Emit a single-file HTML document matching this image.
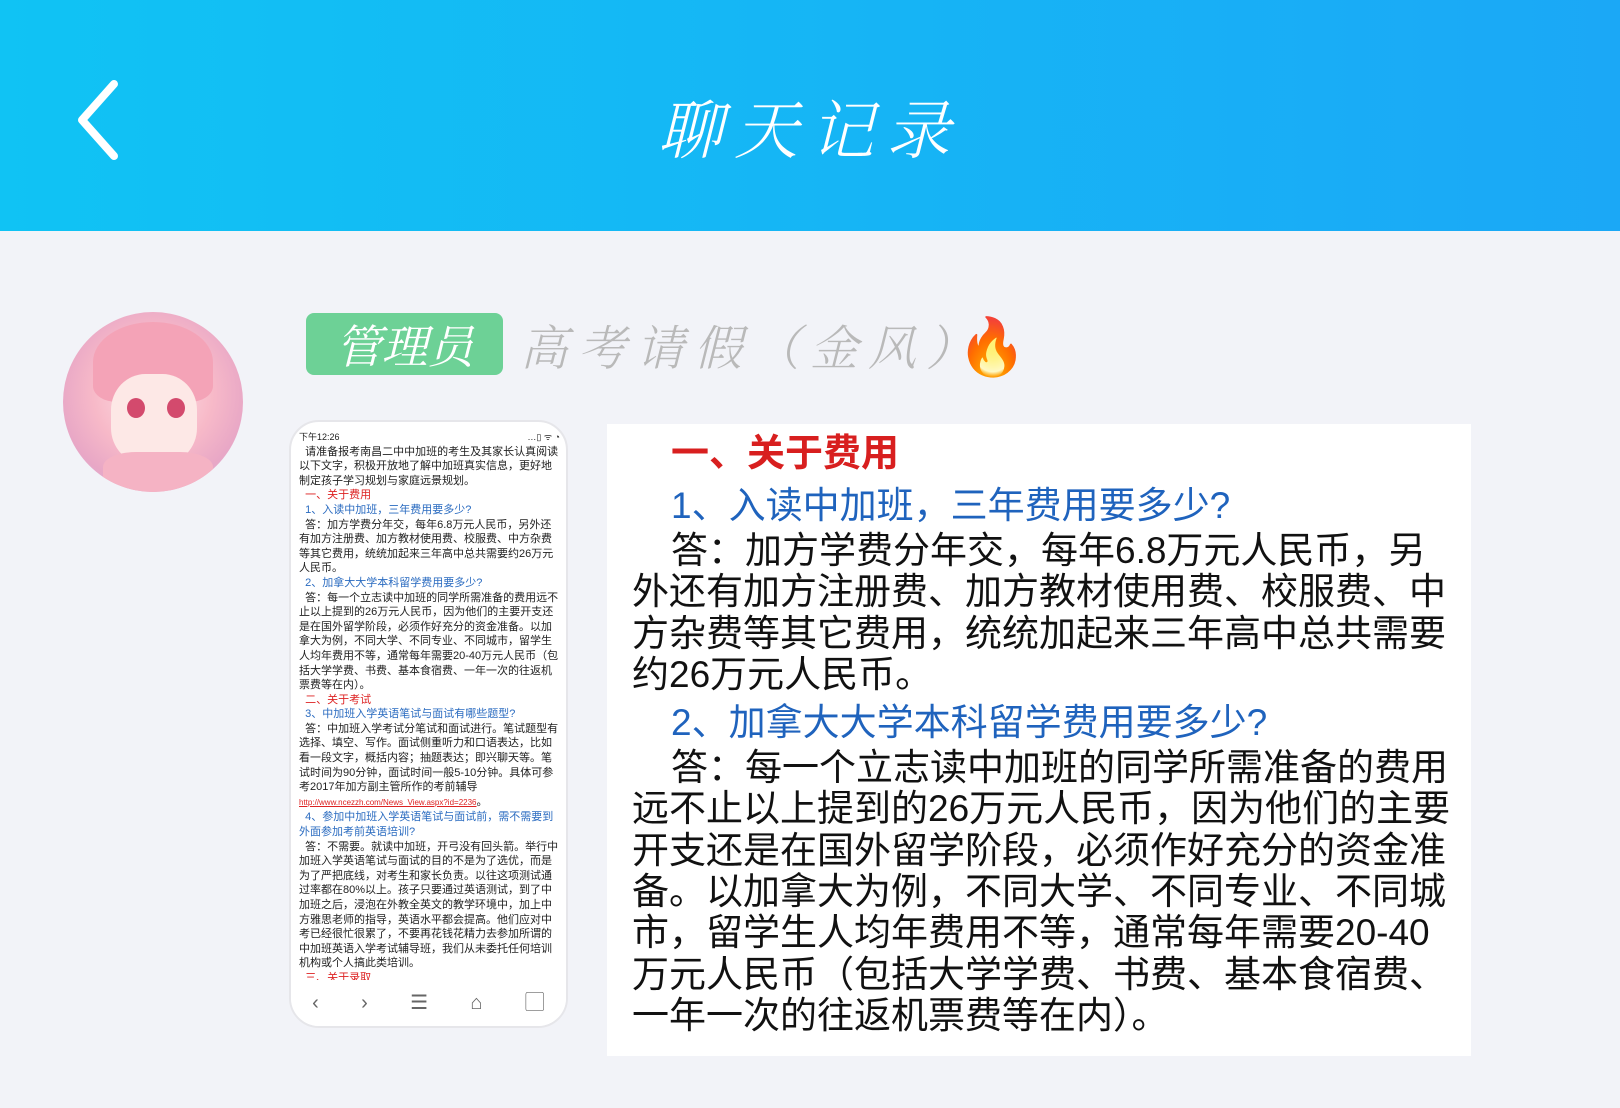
<!DOCTYPE html>
<html><head><meta charset="utf-8"><style>
*{margin:0;padding:0;box-sizing:border-box}
body{width:1620px;height:1108px;overflow:hidden;background:#f2f3f8;font-family:"Liberation Sans","Noto Sans CJK SC",sans-serif;position:relative}
.hdr{position:absolute;left:0;top:0;width:1620px;height:231px;background:linear-gradient(90deg,#10c3f4,#1ba8f6)}
.title{position:absolute;left:0;width:1620px;top:80px;text-align:center;color:#fff;font-family:"Noto Serif CJK SC",serif;font-size:64px;font-weight:300;letter-spacing:12px;font-style:italic}
.av{position:absolute;left:63px;top:312px;width:180px;height:180px;border-radius:50%;background:radial-gradient(circle at 50% 45%,#fde3e6 0,#f7b9c8 45%,#e8a7c6 70%,#c9b3e6 100%);overflow:hidden}
.badge{position:absolute;left:306px;top:313px;width:197px;height:62px;border-radius:8px;background:#6dd196;color:#fff;font-family:"Noto Serif CJK SC",serif;font-size:46px;text-align:center;line-height:62px;font-style:italic}
.name{position:absolute;left:520px;top:313px;font-family:"Noto Serif CJK SC",serif;color:#b9b9b9;font-size:48px;letter-spacing:10px;line-height:64px;font-weight:300;font-style:italic}
.fire{position:absolute;left:957px;top:315px;font-size:56px;line-height:64px}
.phone{position:absolute;left:289px;top:420px;width:279px;height:608px;background:#fff;border-radius:30px;border:2px solid #e6e6ea;overflow:hidden;padding:8px 6px 0 8px;font-size:11px;line-height:14.6px;color:#222}
.phone p{margin:0}
.r{color:#d22}.b{color:#2a6bc0}
.pnav{position:absolute;left:0;bottom:0;width:100%;height:46px;background:#fff;display:flex;justify-content:space-around;align-items:center;font-size:20px;color:#666}
.doc{position:absolute;left:607px;top:424px;width:864px;height:632px;background:#fff;padding:8px 0 0 25px;font-size:37px;line-height:41.3px;color:#111;overflow:hidden}
.doc p{margin:0;white-space:nowrap}
.doc .a{text-indent:39px}
.doc .h{color:#d81f1f;font-weight:bold;padding-left:39px;font-size:38px;line-height:44px}
.doc .q{color:#1f63bd;padding-left:39px;line-height:48px;margin-top:4px}
</style></head><body>
<div class="hdr">
<svg style="position:absolute;left:74px;top:80px" width="50" height="80" viewBox="0 0 50 80"><path d="M40 4 L8 40 L40 76" fill="none" stroke="#fff" stroke-width="8" stroke-linecap="round" stroke-linejoin="round"/></svg>
<div class="title">聊天记录</div>
</div>
<div class="av">
<div style="position:absolute;left:30px;top:10px;width:120px;height:80px;border-radius:50% 50% 20% 20%;background:#f4a3b7"></div>
<div style="position:absolute;left:48px;top:62px;width:86px;height:90px;border-radius:40%;background:#fde8e6"></div>
<div style="position:absolute;left:64px;top:86px;width:18px;height:20px;border-radius:50%;background:#d34a6d"></div>
<div style="position:absolute;left:104px;top:86px;width:18px;height:20px;border-radius:50%;background:#d34a6d"></div>
<div style="position:absolute;left:40px;top:140px;width:110px;height:50px;border-radius:30%;background:#f5b3c4"></div>
</div>
<div class="badge">管理员</div>
<div class="name">高考请假（金风）</div>
<div class="fire">🔥</div>
<div class="phone">
<p style="font-size:9px;display:flex;justify-content:space-between"><span>下午12:26</span><span>…▯ ᯤ ◔</span></p>
<p>&nbsp;&nbsp;请准备报考南昌二中中加班的考生及其家长认真阅读以下文字，积极开放地了解中加班真实信息，更好地制定孩子学习规划与家庭远景规划。</p>
<p class="r">&nbsp;&nbsp;一、关于费用</p>
<p class="b">&nbsp;&nbsp;1、入读中加班，三年费用要多少?</p>
<p>&nbsp;&nbsp;答：加方学费分年交，每年6.8万元人民币，另外还有加方注册费、加方教材使用费、校服费、中方杂费等其它费用，统统加起来三年高中总共需要约26万元人民币。</p>
<p class="b">&nbsp;&nbsp;2、加拿大大学本科留学费用要多少?</p>
<p>&nbsp;&nbsp;答：每一个立志读中加班的同学所需准备的费用远不止以上提到的26万元人民币，因为他们的主要开支还是在国外留学阶段，必须作好充分的资金准备。以加拿大为例，不同大学、不同专业、不同城市，留学生人均年费用不等，通常每年需要20-40万元人民币（包括大学学费、书费、基本食宿费、一年一次的往返机票费等在内）。</p>
<p class="r">&nbsp;&nbsp;二、关于考试</p>
<p class="b">&nbsp;&nbsp;3、中加班入学英语笔试与面试有哪些题型?</p>
<p>&nbsp;&nbsp;答：中加班入学考试分笔试和面试进行。笔试题型有选择、填空、写作。面试侧重听力和口语表达，比如看一段文字，概括内容；抽题表达；即兴聊天等。笔试时间为90分钟，面试时间一般5-10分钟。具体可参考2017年加方副主管所作的考前辅导<span class="r" style="text-decoration:underline;font-size:8px">http://www.ncezzh.com/News_View.aspx?id=2236</span>。</p>
<p class="b">&nbsp;&nbsp;4、参加中加班入学英语笔试与面试前，需不需要到外面参加考前英语培训?</p>
<p>&nbsp;&nbsp;答：不需要。就读中加班，开弓没有回头箭。举行中加班入学英语笔试与面试的目的不是为了选优，而是为了严把底线，对考生和家长负责。以往这项测试通过率都在80%以上。孩子只要通过英语测试，到了中加班之后，浸泡在外教全英文的教学环境中，加上中方雅思老师的指导，英语水平都会提高。他们应对中考已经很忙很累了，不要再花钱花精力去参加所谓的中加班英语入学考试辅导班，我们从未委托任何培训机构或个人搞此类培训。</p>
<p class="r">&nbsp;&nbsp;三、关于录取</p>
<div class="pnav"><span>‹</span><span>›</span><span>☰</span><span>⌂</span><span>▢</span></div>
</div>
<div class="doc">
<p class="h">一、关于费用</p>
<p class="q" style="margin-top:6px">1、入读中加班，三年费用要多少?</p>
<p class="a">答：加方学费分年交，每年6.8万元人民币，另</p>
<p>外还有加方注册费、加方教材使用费、校服费、中</p>
<p>方杂费等其它费用，统统加起来三年高中总共需要</p>
<p>约26万元人民币。</p>
<p class="q">2、加拿大大学本科留学费用要多少?</p>
<p class="a">答：每一个立志读中加班的同学所需准备的费用</p>
<p>远不止以上提到的26万元人民币，因为他们的主要</p>
<p>开支还是在国外留学阶段，必须作好充分的资金准</p>
<p>备。以加拿大为例，不同大学、不同专业、不同城</p>
<p>市，留学生人均年费用不等，通常每年需要20-40</p>
<p>万元人民币（包括大学学费、书费、基本食宿费、</p>
<p>一年一次的往返机票费等在内）。</p>
</div>
</body></html>
